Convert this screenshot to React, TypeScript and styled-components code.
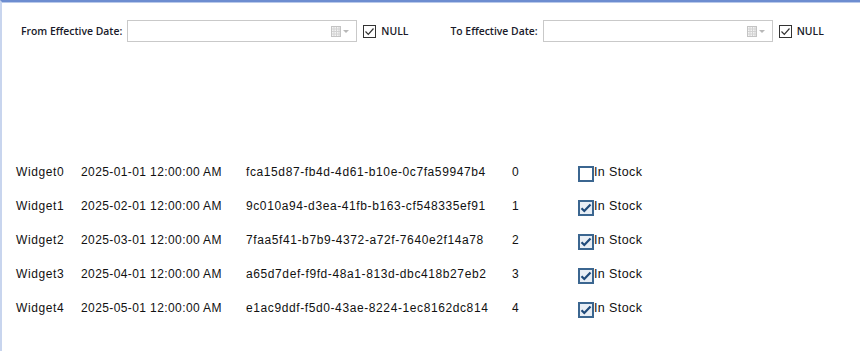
import React from 'react'
import styled, { createGlobalStyle } from 'styled-components'

const GlobalStyle = createGlobalStyle`
  html, body {
    margin: 0;
    padding: 0;
    background: #ffffff;
  }
  body {
    font-family: "Liberation Sans", Arial, sans-serif;
  }
`

// Window frame
const Frame = styled.div`
  width: 860px;
  height: 351px;
  box-sizing: border-box;
  border-top: 2px solid #6d8dd0;
  box-shadow: inset 0 1px 0 #b9c9ea;
  border-left: 2px solid #c8d5ee;
  background: #ffffff;
  overflow: hidden;
`

const FilterBar = styled.div`
  display: flex;
  align-items: center;
  padding: 18px 0 0 19px;
  gap: 42px;
`

const FilterGroup = styled.div`
  display: flex;
  align-items: center;
`

const FilterLabel = styled.span`
  font-family: "Open Sans", "Noto Sans", sans-serif;
  font-size: 10.4px;
  font-weight: 600;
  color: #1a1a2a;
  margin-right: 5px;
  white-space: nowrap;
`

const DateBox = styled.div`
  width: 230px;
  height: 22px;
  box-sizing: border-box;
  border: 1px solid #c9c9c9;
  background: #ffffff;
  display: flex;
  align-items: center;
  justify-content: flex-end;
  padding-right: 7px;
  gap: 2px;
`

const NullBox = styled.span`
  width: 13px;
  height: 13px;
  box-sizing: border-box;
  border: 1px solid #333333;
  margin-left: 6px;
  display: flex;
  align-items: center;
  justify-content: center;
`

const NullLabel = styled.span`
  font-family: "Open Sans", "Noto Sans", sans-serif;
  font-size: 10.4px;
  font-weight: 600;
  color: #1a1a2a;
  margin-left: 5px;
`

const Rows = styled.div`
  margin-top: 113px;
  display: flex;
  flex-direction: column;
`

const Row = styled.div`
  display: grid;
  grid-template-columns: 65px 165px 266px 66px 16px auto;
  align-items: center;
  height: 34px;
  padding-left: 14px;
  font-size: 12px;
  color: #111111;
  white-space: nowrap;
`

const Cell = styled.span<{ $stretch?: number }>`
  letter-spacing: ${p => p.$stretch ?? 0}px;
`

const StockBox = styled.span<{ $checked: boolean }>`
  width: 16px;
  height: 16px;
  box-sizing: border-box;
  border: 2px solid #3b6690;
  background: ${p => (p.$checked ? '#e8eef5' : '#ffffff')};
  display: flex;
  align-items: center;
  justify-content: center;
  margin-top: 4px;
`

const StockLabel = styled.span`
  font-size: 12.5px;
  letter-spacing: 0.4px;
  color: #111111;
`

const CalendarIcon = () => (
  <svg width="18" height="11" viewBox="0 0 18 11">
    <rect x="0.5" y="0.5" width="9" height="10" fill="#f4f4f4" stroke="#c4c4c4" />
    <path d="M3 1v9M5.5 1v9M8 1v9M1 3h8M1 5.5h8M1 8h8" stroke="#d2d2d2" strokeWidth="1" />
    <path d="M12 4h6l-3 3z" fill="#b8b8b8" />
  </svg>
)

const SmallCheck = () => (
  <svg width="11" height="11" viewBox="0 0 11 11">
    <path d="M1.5 5.5l2.8 2.8L9.5 2.5" fill="none" stroke="#333" strokeWidth="1.2" />
  </svg>
)

const BlueCheck = () => (
  <svg width="12" height="12" viewBox="0 0 12 12">
    <path d="M1.5 6.2l2.8 2.8L10.5 2.5" fill="none" stroke="#1f4a7a" strokeWidth="2.2" />
  </svg>
)

const widgets = [
  { name: 'Widget0', date: '2025-01-01 12:00:00 AM', id: 'fca15d87-fb4d-4d61-b10e-0c7fa59947b4', qty: 0, inStock: false },
  { name: 'Widget1', date: '2025-02-01 12:00:00 AM', id: '9c010a94-d3ea-41fb-b163-cf548335ef91', qty: 1, inStock: true },
  { name: 'Widget2', date: '2025-03-01 12:00:00 AM', id: '7faa5f41-b7b9-4372-a72f-7640e2f14a78', qty: 2, inStock: true },
  { name: 'Widget3', date: '2025-04-01 12:00:00 AM', id: 'a65d7def-f9fd-48a1-813d-dbc418b27eb2', qty: 3, inStock: true },
  { name: 'Widget4', date: '2025-05-01 12:00:00 AM', id: 'e1ac9ddf-f5d0-43ae-8224-1ec8162dc814', qty: 4, inStock: true },
]

const filters = ['From Effective Date:', 'To Effective Date:']

export default function App() {
  return (
    <>
      <GlobalStyle />
      <Frame>
        <FilterBar>
          {filters.map(label => (
            <FilterGroup key={label}>
              <FilterLabel>{label}</FilterLabel>
              <DateBox>
                <CalendarIcon />
              </DateBox>
              <NullBox>
                <SmallCheck />
              </NullBox>
              <NullLabel>NULL</NullLabel>
            </FilterGroup>
          ))}
        </FilterBar>

        <Rows>
          {widgets.map(w => (
            <Row key={w.name}>
              <Cell $stretch={0.6}>{w.name}</Cell>
              <Cell $stretch={0.4}>{w.date}</Cell>
              <Cell $stretch={0.6}>{w.id}</Cell>
              <Cell>{w.qty}</Cell>
              <StockBox $checked={w.inStock}>{w.inStock && <BlueCheck />}</StockBox>
              <StockLabel>In Stock</StockLabel>
            </Row>
          ))}
        </Rows>
      </Frame>
    </>
  )
}
